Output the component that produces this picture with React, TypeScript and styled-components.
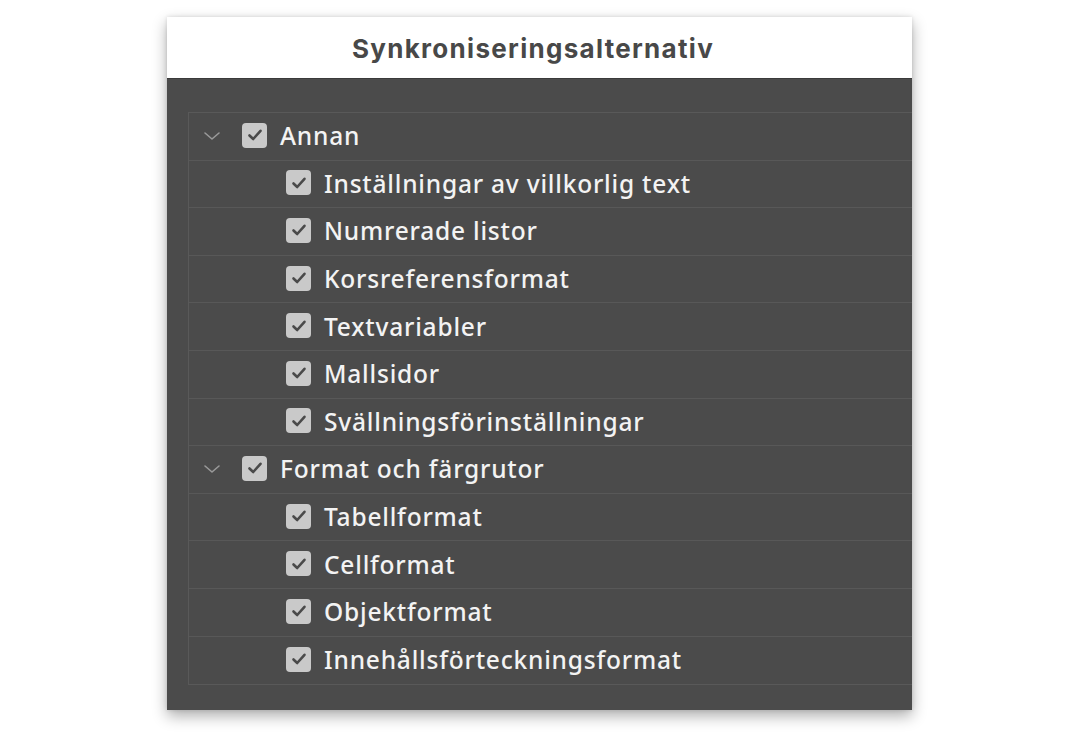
import React from "react";
import styled, { createGlobalStyle } from "styled-components";

const Global = createGlobalStyle`
  html, body { margin: 0; padding: 0; background: #ffffff; }
  body { font-family: "Noto Sans", "Open Sans", sans-serif; }
`;

const Page = styled.div`
  width: 1088px;
  height: 746px;
  padding: 17px 0 0 167px;
  box-sizing: border-box;
`;

const Panel = styled.div`
  width: 745px;
  height: 693px;
  display: flex;
  flex-direction: column;
  overflow: hidden;
  box-shadow: 0 6px 14px rgba(0, 0, 0, 0.32), 0 0 4px rgba(0, 0, 0, 0.12);
  position: relative;
`;

const Header = styled.div`
  height: 60px;
  padding-top: 1px;
  flex: none;
  background: #ffffff;
  border-bottom: 1px solid #3a3a3a;
  display: flex;
  align-items: center;
  justify-content: center;
  padding-right: 13px;
  font-family: "Inter", "Liberation Sans", sans-serif;
  font-weight: 700;
  font-size: 26px;
  color: #484848;
  letter-spacing: 1.3px;
`;

const Body = styled.div`
  flex: 1;
  background: #4b4b4b;
  padding: 33px 0 0 21px;
  box-sizing: border-box;
`;

const List = styled.div`
  width: 760px;
  border: 1px solid #595959;
  border-right: none;
  display: flex;
  flex-direction: column;
`;

const Row = styled.div<{ $child?: boolean }>`
  height: 47.6px;
  box-sizing: border-box;
  display: flex;
  align-items: center;
  padding-left: ${(p) => (p.$child ? "97px" : "14px")};
  border-bottom: 1px solid #585858;
  &:last-child { border-bottom: none; }
`;

const Chevron = styled.svg`
  width: 18px;
  height: 10px;
  margin-right: 21px;
  flex: none;
`;

const Box = styled.span`
  width: 25px;
  height: 25px;
  border-radius: 4px;
  background: #c9c9c9;
  display: inline-flex;
  align-items: center;
  justify-content: center;
  flex: none;
  margin-top: -2px;
`;

const Label = styled.span`
  margin-left: 13px;
  margin-top: -1px;
  color: #f3f3f3;
  font-size: 24.5px;
  font-weight: 500;
  letter-spacing: 0.8px;
  white-space: nowrap;
`;

const Check = () => (
  <svg width="16" height="14" viewBox="0 0 16 14">
    <path d="M2.5 7.5 L6.2 11 L13.5 2.8" fill="none" stroke="#4a4a4a" strokeWidth="2.6" strokeLinecap="round" strokeLinejoin="round" />
  </svg>
);

const groups = [
  {
    title: "Annan",
    items: [
      "Inställningar av villkorlig text",
      "Numrerade listor",
      "Korsreferensformat",
      "Textvariabler",
      "Mallsidor",
      "Svällningsförinställningar",
    ],
  },
  {
    title: "Format och färgrutor",
    items: ["Tabellformat", "Cellformat", "Objektformat", "Innehållsförteckningsformat"],
  },
];

export default function App() {
  return (
    <>
      <Global />
      <Page>
        <Panel>
          <Header>Synkroniseringsalternativ</Header>
          <Body>
            <List>
              {groups.map((g) => (
                <React.Fragment key={g.title}>
                  <Row>
                    <Chevron viewBox="0 0 18 10">
                      <path d="M2 2 L9 8 L16 2" fill="none" stroke="#9a9a9a" strokeWidth="1.6" strokeLinecap="round" strokeLinejoin="round" />
                    </Chevron>
                    <Box><Check /></Box>
                    <Label>{g.title}</Label>
                  </Row>
                  {g.items.map((it) => (
                    <Row $child key={it}>
                      <Box><Check /></Box>
                      <Label>{it}</Label>
                    </Row>
                  ))}
                </React.Fragment>
              ))}
            </List>
          </Body>
        </Panel>
      </Page>
    </>
  );
}
